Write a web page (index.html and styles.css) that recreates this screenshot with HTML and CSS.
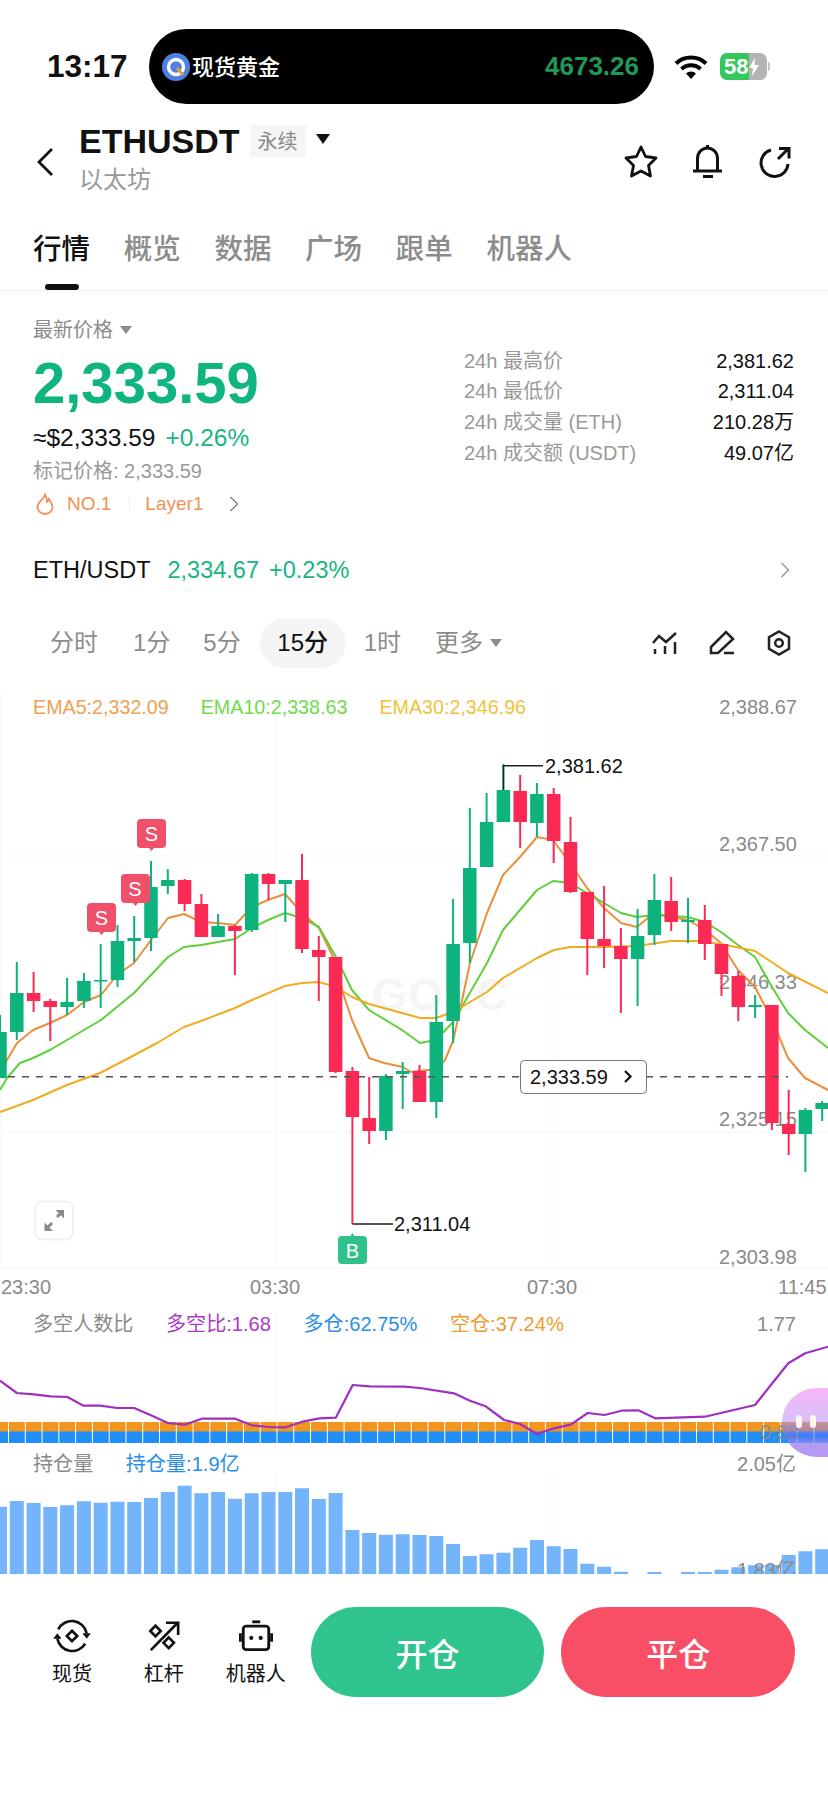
FILE: index.html
```html
<!DOCTYPE html>
<html lang="zh-CN">
<head>
<meta charset="utf-8">
<title>ETHUSDT</title>
<link rel="stylesheet" href="styles.css">
</head>
<body>
<div class="page">
  <div class="status">
    <div class="time">13:17</div>
    <div class="island">
      <svg class="gold-logo" viewBox="0 0 28 28"><circle cx="14" cy="14" r="14" fill="#4f7fe0"/><circle cx="14" cy="14" r="7.5" fill="none" stroke="#fff" stroke-width="3.4"/><path d="M15 15l6 7" stroke="#d9a441" stroke-width="3"/></svg>
      <span class="gold-name">现货黄金</span>
      <span class="gold-price">4673.26</span>
    </div>
    <svg class="wifi" viewBox="0 0 34 24"><path d="M2 8.5a22 22 0 0 1 30 0M7.5 14a14 14 0 0 1 19 0" fill="none" stroke="#000" stroke-width="4"/><path d="M12 18.5a7.5 7.5 0 0 1 10 0L17 24z" fill="#000"/></svg>
    <div class="battery"><span class="battery-num">58</span><svg class="bolt" viewBox="0 0 10 18"><path d="M6 0L0 10h4l-1 8 7-11H5.500z" fill="#fff"/></svg></div>
    <span class="battery-tip"></span>
  </div>

  <header class="head">
    <svg class="back" viewBox="0 0 18 30"><path d="M16 2L3 15l13 13" fill="none" stroke="#111" stroke-width="2.800"/></svg>
    <div class="title-block">
      <div class="title-line">
        <span class="symbol">ETHUSDT</span>
        <span class="tag">永续</span>
        <span class="caret"></span>
      </div>
      <div class="subname">以太坊</div>
    </div>
    <div class="head-icons">
      <svg class="hicon" viewBox="0 0 36 36"><path d="M18 3l4.500 9.500L33 14l-7.500 7.500 2 10.500L18 27l-9.500 5 2-10.500L3 14l10.500-1.500z" fill="none" stroke="#111" stroke-width="2.800" stroke-linejoin="round"/></svg>
      <svg class="hicon" viewBox="0 0 36 36"><path d="M3 27h29M7.500 27V14.500a10 10.500 0 0 1 20 0V27M17.500 4V1M13 32.500h10" fill="none" stroke="#111" stroke-width="3"/></svg>
      <svg class="hicon" viewBox="0 0 36 36"><path d="M14 6a13.500 13.500 0 1 0 17 14M21 15L31 5M22 4.500h10v10" fill="none" stroke="#111" stroke-width="3"/></svg>
    </div>
  </header>

  <nav class="tabs">
    <span class="tab tab-active">行情</span>
    <span class="tab">概览</span>
    <span class="tab">数据</span>
    <span class="tab">广场</span>
    <span class="tab">跟单</span>
    <span class="tab">机器人</span>
  </nav>

  <section class="price">
    <div class="price-left">
      <div class="latest">最新价格<span class="mini-caret"></span></div>
      <div class="big">2,333.59</div>
      <div class="usd"><span class="usd-val">≈$2,333.59</span><span class="up">+0.26%</span></div>
      <div class="mark">标记价格: 2,333.59</div>
      <div class="labels">
        <svg class="fire" viewBox="0 0 18 22"><path d="M9 1.500c0 4-7.500 7-7.500 12.500a7.500 7 0 0 0 15 0C16.500 10 14 8 13 6c-.5 1.500-1 2.500-2 3C11 6 10.500 3.500 9 1.500z" fill="none" stroke="#ef9255" stroke-width="1.800"/></svg>
        <span class="no1">NO.1</span>
        <span class="sep"></span>
        <span class="layer">Layer1</span>
        <svg class="chev" viewBox="0 0 10 16"><path d="M1.500 1l7 7-7 7" fill="none" stroke="#888" stroke-width="1.500"/></svg>
      </div>
    </div>
    <dl class="stats">
      <div class="stat"><dt>24h 最高价</dt><dd>2,381.62</dd></div>
      <div class="stat"><dt>24h 最低价</dt><dd>2,311.04</dd></div>
      <div class="stat"><dt>24h 成交量 (ETH)</dt><dd>210.28万</dd></div>
      <div class="stat"><dt>24h 成交额 (USDT)</dt><dd>49.07亿</dd></div>
    </dl>
  </section>

  <div class="pair">
    <span class="pair-name">ETH/USDT</span>
    <span class="pair-price">2,334.67</span>
    <span class="pair-price pair-pct">+0.23%</span>
    <svg class="chev pair-chev" viewBox="0 0 10 16"><path d="M1.500 1l7 7-7 7" fill="none" stroke="#999" stroke-width="1.500"/></svg>
  </div>

  <div class="periods">
    <span class="period p1">分时</span>
    <span class="period p2">1分</span>
    <span class="period p3">5分</span>
    <span class="period period-active">15分</span>
    <span class="period p5">1时</span>
    <span class="period p6">更多<span class="mini-caret"></span></span>
    <div class="tools">
      <svg class="tool-icon" viewBox="0 0 26 26"><path d="M1 13l6-7 7 6 10-9M3 19v5M13 16v8M23 12v12" fill="none" stroke="#222" stroke-width="2.500"/></svg>
      <svg class="tool-icon" viewBox="0 0 26 26"><path d="M2 17L17 2l7 7L9 23H2zM15 23h10" fill="none" stroke="#222" stroke-width="2.500"/></svg>
      <svg class="tool-icon" viewBox="0 0 26 26"><path d="M13 1.500l10 5.700v11.600l-10 5.700-10-5.700V7.200z" fill="none" stroke="#222" stroke-width="2.500"/><circle cx="13" cy="13" r="3.800" fill="none" stroke="#222" stroke-width="2.500"/></svg>
    </div>
  </div>

  <div class="panels">
    <section class="panel panel-main">
      <svg class="canvas" viewBox="0 668 828 632">
        <path class="grid" d="M1 690V1270M275 690V1270M552 690V1270M0 856H828M0 994H828M0 1132H828M0 1268H828"/>
        <text class="axis" x="719" y="851">2,367.50</text>
        <text class="axis" x="719" y="989">2,346.33</text>
        <text class="axis" x="719" y="1126">2,325.15</text>
        <text class="axis" x="719" y="1264">2,303.98</text>
        <text class="watermark" x="372" y="1010">GOEC</text>
        <polyline class="ema ema5" points="0,1078 7,1060 17,1043 33,1030 50,1023 67,1015 84,1002 101,995 117,975 134,963 151,940 168,918 184,914 201,922 218,923 235,925 252,907 268,900 285,894 302,913 319,928 336,963 343,993 352,1020 369,1058 384,1063 403,1067 411,1072 427,1070 436,1070 445,1060 453,1041 460,1010 470,963 487,913 503,875 520,857 537,837 553,840 570,863 587,888 604,908 621,923 637,927 654,913 671,917 688,920 705,930 721,943 738,970 755,987 772,1020 788,1058 805,1078 828,1090"/>
        <polyline class="ema ema10" points="0,1090 7,1078 20,1063 33,1058 50,1050 67,1040 101,1020 134,993 168,957 184,947 201,945 218,942 235,939 252,928 268,920 285,913 302,918 319,927 336,957 352,990 369,1010 402,1030 420,1043 436,1040 453,1022 460,1010 487,963 503,930 520,910 537,890 553,881 570,883 587,893 604,903 621,913 637,917 654,915 671,916 688,917 705,922 721,932 738,945 755,957 772,987 788,1013 805,1030 828,1048"/>
        <polyline class="ema ema30" points="0,1112 33,1100 67,1085 100,1073 127,1059 157,1043 184,1027 201,1021 235,1008 252,1000 285,986 302,983 319,982 336,987 352,997 369,1004 402,1013 420,1018 436,1018 453,1012 487,992 503,978 537,958 554,950 570,947 604,947 637,946 671,941 697,941 721,944 755,951 788,973 828,993"/>
        <path class="wick wick-g" d="M0 1015V1078M16.800 962V1040M67.100 978V1015M83.900 973V1008M100.700 944V1008M117.500 925V987M134.200 916V962M151 861V951M167.800 869V894M218.100 914V937M251.700 873V932M285.300 880V922M385.900 1074V1140M402.700 1062V1109M436.300 995V1118M453.100 899V1043M469.800 808V963M486.600 793V867M503.400 764V822M536.900 783V837M637.600 909V1006M654.400 874V945M688 898V943M755.100 995V1018M805.400 1108V1172M822.200 1101V1121"/>
        <path class="body body-g" d="M0 1032V1078M16.800 993V1032M67.100 1002V1007M83.900 981V1001M100.700 980V981.500M117.500 941V980M134.200 938V941M151 887V938M167.800 880V886M218.100 926V937M251.700 874V930M285.300 880V884M385.900 1076V1131M402.700 1071V1074M436.300 1022V1102M453.100 944V1021M469.800 868V943M486.600 822V867M503.400 790V822M536.900 794V823M637.600 936V959M654.400 900V935M688 920V922M755.100 1005V1007M805.400 1110V1134M822.200 1103V1109"/>
        <path class="wick wick-r" d="M33.600 972V1012M50.300 999V1041M184.600 879V911M201.400 894V937M234.900 925V975M268.500 873V900M302 854V953M318.800 936V1001M335.600 957V1073M352.400 1067V1224M369.200 1077V1144M419.500 1065V1102M520.200 775V848M553.700 788V863M570.500 817V893M587.300 892V975M604.100 886V968M620.900 928V1013M671.200 877V931M704.800 905V960M721.500 944V996M738.300 971V1021M771.900 1005V1130M788.700 1090V1155"/>
        <path class="body body-r" d="M33.600 993V1001M50.300 1001V1007M184.600 880V904M201.400 904V937M234.900 926V931M268.500 874V884M302 880V949M318.800 950V957M335.600 957V1072M352.400 1071V1117M369.200 1118V1131M419.500 1071V1102M520.200 791V822M553.700 794V841M570.500 842V892M587.300 892V939M604.100 939V946M620.900 946V959M671.200 901V922M704.800 920V944M721.500 944V974M738.300 976V1007M771.900 1005V1123M788.700 1124V1134"/>
        <path class="dash" d="M8 1076.700H520M646 1076.700H788"/>
        <path class="leader" d="M503.400 790V765.700H543M352.400 1224H393"/>
        <text class="hi" x="545" y="773">2,381.62</text>
        <text class="hi" x="394" y="1231">2,311.04</text>
        <rect class="now-box" x="520.500" y="1060.500" width="126" height="33" rx="4"/>
        <text class="hi" x="530" y="1084">2,333.59</text>
        <path class="now-chev" d="M625 1071l5.500 5.500-5.500 5.500"/>
        <g class="sig-s">
          <path d="M141 819h21a4 4 0 0 1 4 4v21a4 4 0 0 1-4 4h-8l-2.500 3-2.500-3h-8a4 4 0 0 1-4-4v-21a4 4 0 0 1 4-4z"/>
          <path d="M125 874h21a4 4 0 0 1 4 4v21a4 4 0 0 1-4 4h-8l-2.500 3-2.500-3h-8a4 4 0 0 1-4-4v-21a4 4 0 0 1 4-4z"/>
          <path d="M91 903h21a4 4 0 0 1 4 4v21a4 4 0 0 1-4 4h-8l-2.500 3-2.500-3h-8a4 4 0 0 1-4-4v-21a4 4 0 0 1 4-4z"/>
        </g>
        <text class="sig-text" x="151.500" y="841">S</text>
        <text class="sig-text" x="135" y="896">S</text>
        <text class="sig-text" x="101.500" y="925">S</text>
        <path class="sig-b" d="M342 1236h8.500l2-3 2 3h8.500a4 4 0 0 1 4 4v20a4 4 0 0 1-4 4h-21a4 4 0 0 1-4-4v-20a4 4 0 0 1 4-4z"/>
        <text class="sig-text" x="352.500" y="1258">B</text>
        <rect class="expand" x="35" y="1201.500" width="38" height="38" rx="7"/>
        <path class="expand-ico" d="M46 1229l6-6M57 1217l6-6"/>
        <path class="expand-tip" d="M44.500 1222.500v8.500h8.500zM64 1210h-8.500l8.500 8.500z"/>
        <text class="time-label" x="1" y="1294">23:30</text>
        <text class="time-label" x="250" y="1294">03:30</text>
        <text class="time-label" x="527" y="1294">07:30</text>
        <text class="time-label" x="778" y="1294">11:45</text>
      </svg>
      <div class="legend legend-main">
        <span class="ema5-t">EMA5:2,332.09</span>
        <span class="ema10-t">EMA10:2,338.63</span>
        <span class="ema30-t">EMA30:2,346.96</span>
        <span class="legend-right">2,388.67</span>
      </div>
    </section>

    <section class="panel panel-ratio">
      <svg class="canvas" viewBox="0 1300 828 150">
        <path class="grid" d="M275 1310V1450M552 1310V1450"/>
        <rect class="bar-o" x="0" y="1422" width="828" height="10"/>
        <rect class="bar-b" x="0" y="1431.500" width="828" height="11.500"/>
        <path class="bar-gaps" d="M8 1432.500H828"/>
        <text class="axis" x="760" y="1439">0.83</text>
        <polyline class="ratio" points="0,1380.700 16.900,1393 33.800,1394.300 50.700,1396.300 67.600,1397 83.400,1405.700 100.300,1405.700 117.200,1408 134.100,1408 151,1415.300 167.900,1423 184.800,1424.700 201.700,1418.700 235,1418.700 251.800,1425.300 268.700,1427 285.600,1427.300 302.500,1421.700 319.400,1418.300 335.800,1417.700 352.700,1385 369.600,1386.300 403.900,1386.700 419.700,1388 454,1393.300 470,1400.700 485.700,1406.300 504.200,1420 520,1424 537,1434 553.900,1428.300 570.800,1424.700 587.700,1413 604.500,1415 621.400,1410.700 638.300,1410.300 655.200,1418.300 704.900,1416.700 755,1405 770.900,1385 788.300,1363.300 805.200,1353.300 828,1346.700"/>
      </svg>
      <div class="legend legend-ratio">
        <span class="muted">多空人数比</span>
        <span class="purple">多空比:1.68</span>
        <span class="blue">多仓:62.75%</span>
        <span class="orange">空仓:37.24%</span>
        <span class="legend-right">1.77</span>
      </div>
    </section>

    <section class="panel panel-oi">
      <svg class="canvas" viewBox="0 1450 828 124">
        <path class="grid" d="M275 1470V1574M552 1470V1574"/>
        <path class="oi-bars" d="M0 1506.700V1574M16.800 1501V1574M33.600 1503V1574M50.300 1507V1574M67.100 1505.300V1574M83.900 1501.300V1574M100.700 1502.700V1574M117.500 1501.700V1574M134.200 1502V1574M151 1498V1574M167.800 1492V1574M184.600 1485.700V1574M201.400 1493.300V1574M218.100 1492V1574M234.900 1498.700V1574M251.700 1493.300V1574M268.500 1492V1574M285.300 1492V1574M302 1488.300V1574M318.800 1499V1574M335.600 1493V1574M352.400 1530V1574M369.200 1533V1574M385.900 1534.700V1574M402.700 1534.300V1574M419.500 1535V1574M436.300 1536V1574M453.100 1544V1574M469.800 1556V1574M486.600 1554.300V1574M503.400 1552.700V1574M520.200 1547.700V1574M537 1540V1574M553.700 1546.300V1574M570.500 1549V1574M587.300 1563.700V1574M604.100 1566.700V1574M620.900 1571.700V1574M654.400 1572V1574M688 1572V1574M704.800 1572V1574M721.500 1569.700V1574M738.300 1567.300V1574M755.100 1565.300V1574M771.900 1565V1574M788.700 1555V1574M805.400 1551.300V1574M822.200 1549.300V1574"/>
        <text class="axis" x="737" y="1577">1.83亿</text>
      </svg>
      <div class="legend legend-oi">
        <span class="muted">持仓量</span>
        <span class="blue">持仓量:1.9亿</span>
        <span class="legend-right">2.05亿</span>
      </div>
    </section>

    <div class="bubble"><span class="eye"></span><span class="eye"></span></div>
  </div>

  <footer class="foot">
    <div class="shortcut">
      <svg class="foot-icon" viewBox="0 0 36 36"><path d="M3.500 11A16 16 0 0 1 33.500 15M32 26A16 16 0 0 1 2.500 21" fill="none" stroke="#111" stroke-width="2.800"/><path d="M29 15h9l-4.500 6zM7 21h-9l4.500-6z" fill="#111"/><path d="M18 12.500l5.500 5.500-5.500 5.500-5.500-5.500z" fill="none" stroke="#111" stroke-width="2.800"/></svg>
      <span>现货</span>
    </div>
    <div class="shortcut">
      <svg class="foot-icon" viewBox="0 0 36 36"><path d="M4 33L32 4.500M20 4h13v13" fill="none" stroke="#111" stroke-width="2.800"/><path d="M9 7l5.500 5.700L9 18.400l-5.500-5.700zM23 19.500l5.500 5.700-5.500 5.700-5.500-5.700z" fill="none" stroke="#111" stroke-width="2.800"/></svg>
      <span>杠杆</span>
    </div>
    <div class="shortcut">
      <svg class="foot-icon" viewBox="0 0 36 36"><path d="M14 3h8.500" stroke="#111" stroke-width="3"/><rect x="4.500" y="7.500" width="27" height="25" rx="3" fill="none" stroke="#111" stroke-width="3"/><path d="M1.500 15v9M34.500 15v9" stroke="#111" stroke-width="3"/><circle cx="13" cy="20" r="2.200" fill="#111"/><circle cx="23" cy="20" r="2.200" fill="#111"/></svg>
      <span>机器人</span>
    </div>
    <button class="cta cta-open">开仓</button>
    <button class="cta cta-close">平仓</button>
  </footer>
</div>
</body>
</html>
```

FILE: styles.css
```css
* { box-sizing: border-box; margin: 0; padding: 0; }
html, body { background: #fff; }
body {
  width: 828px;
  height: 1801px;
  overflow: hidden;
  font-family: "Liberation Sans", "Noto Sans CJK SC", sans-serif;
  color: #111;
}
.page { width: 828px; }

/* status bar */
.status { display: flex; align-items: center; height: 104px; padding: 29px 0 0 47px; }
.time { width: 102px; font-size: 31.500px; font-weight: 700; }
.island {
  display: flex; align-items: center;
  width: 505px; height: 75px;
  padding: 0 15px 0 13px;
  background: #000;
  border-radius: 38px;
}
.gold-logo { width: 28px; height: 28px; margin-right: 2px; }
.gold-name { margin-bottom: 4px; color: #fff; font-size: 22px; font-weight: 500; }
.gold-price { margin-left: auto; color: #1e9a58; font-size: 26px; font-weight: 700; }
.wifi { width: 34px; height: 24px; margin-left: 20px; }
.battery {
  display: flex; align-items: center;
  width: 47px; height: 27px;
  margin-left: 12px;
  padding-left: 4px;
  border-radius: 7px;
  background: linear-gradient(90deg, #34c759 0 62%, #b4b4b4 62% 100%);
}
.battery-num { color: #fff; font-size: 22px; font-weight: 700; line-height: 27px; }
.bolt { width: 10px; height: 18px; margin-left: 1px; }
.battery-tip { width: 2px; height: 9px; margin-left: 1px; background: #c4c4c4; border-radius: 0 2px 2px 0; }

/* header */
.head { display: flex; align-items: center; height: 96px; padding: 20px 35px 0 36px; }
.back { width: 18px; height: 30px; }
.title-block { align-self: flex-start; margin-left: 25px; }
.title-line { display: flex; align-items: center; height: 34px; }
.symbol { font-size: 34px; font-weight: 700; line-height: 34px; }
.tag {
  display: flex; align-items: center; justify-content: center;
  width: 56px; height: 32px;
  margin-left: 10px;
  padding-bottom: 2px;
  background: #f5f5f5;
  color: #888;
  font-size: 20px;
}
.caret {
  width: 0; height: 0;
  margin: 0 0 4px 10px;
  border-left: 7.5px solid transparent;
  border-right: 7.5px solid transparent;
  border-top: 10px solid #111;
}
.subname { margin-top: 5px; color: #999; font-size: 24px; line-height: 34px; }
.head-icons { display: flex; align-items: center; gap: 31px; margin-left: auto; }
.hicon { width: 36px; height: 36px; }

/* tabs */
.tabs {
  display: flex; gap: 33.700px;
  height: 91px;
  padding: 32px 0 0 33px;
  border-bottom: 1px solid #f2f2f2;
}
.tab { position: relative; color: #8c8c8c; font-size: 28.500px; line-height: 34px; height: 34px; font-weight: 500; }
.tab-active { color: #111; }
.tab-active::after {
  content: "";
  position: absolute; left: 12px; top: 52px;
  width: 34px; height: 6px;
  border-radius: 3px;
  background: #111;
}

/* price block */
.price { display: flex; padding: 25px 34px 0 33px; }
.price-left { flex: 1; }
.latest { display: flex; align-items: center; color: #8c8c8c; font-size: 20px; line-height: 28px; }
.mini-caret {
  display: inline-block;
  width: 0; height: 0;
  margin-left: 7px;
  border-left: 6px solid transparent;
  border-right: 6px solid transparent;
  border-top: 8px solid #8c8c8c;
}
.big { margin-top: 7px; color: #0fb57f; font-size: 58px; font-weight: 700; line-height: 64px; }
.usd { display: flex; gap: 10px; margin-top: 8px; font-size: 24.500px; line-height: 30px; }
.usd-val { font-weight: 500; }
.up { color: #17b582; }
.mark { margin-top: 5px; color: #999; font-size: 20px; line-height: 26px; }
.labels { display: flex; align-items: center; height: 26px; margin-top: 7px; font-size: 19px; color: #ef9255; }
.fire { width: 18px; height: 22px; margin-left: 3px; }
.no1 { margin-left: 13px; }
.sep { width: 1px; height: 15px; margin: 0 15px 0 18px; background: #eee; }
.chev { width: 10px; height: 16px; }
.labels .chev { margin-left: 26px; }
.stats { width: 330px; padding-top: 29.500px; }
.stat { display: flex; justify-content: space-between; height: 30.700px; line-height: 30.700px; font-size: 20px; }
.stat dt { color: #999; }
.stat dd { color: #111; }

/* pair row */
.pair { display: flex; align-items: center; height: 30px; margin-top: 38px; padding: 0 38px 0 33px; }
.pair-name { font-size: 23.500px; font-weight: 500; }
.pair-price { margin-left: 17px; color: #17b582; font-size: 23.500px; }
.pair-pct { margin-left: 10px; }
.pair-chev { margin-left: auto; }

/* period row */
.periods { position: relative; display: flex; align-items: center; height: 50px; margin-top: 33px; padding-left: 50px; }
.period { color: #8c8c8c; font-size: 24px; line-height: 50px; white-space: nowrap; }
.p2 { margin-left: 35px; }
.p3 { margin-left: 33px; }
.period-active {
  margin-left: 19px;
  width: 86px; height: 50px;
  border-radius: 25px;
  background: #f5f5f5;
  color: #111;
  font-weight: 500;
  text-align: center;
}
.p5 { margin-left: 18px; }
.p6 { display: flex; align-items: center; margin-left: 34px; }
.tools { display: flex; align-items: center; gap: 31px; margin-left: auto; padding-right: 36px; }
.tool-icon { width: 26px; height: 26px; }

/* chart panels */
.panels { position: relative; }
.panel { position: relative; overflow: hidden; }
.panel-main { height: 632px; }
.panel-ratio { height: 150px; }
.panel-oi { height: 124px; }
.canvas { position: absolute; left: 0; top: 0; width: 828px; height: 100%; }
.grid { fill: none; stroke: #f6f6f6; stroke-width: 1; }
.axis, .time-label { fill: #8a8a8a; font-size: 20px; }
.watermark { fill: #f5f5f5; font-size: 44px; font-weight: 700; letter-spacing: 2px; }
.ema { fill: none; stroke-width: 2; stroke-linejoin: round; }
.ema5 { stroke: #ea8f3c; }
.ema10 { stroke: #5fcf3a; }
.ema30 { stroke: #f0ab1f; }
.wick { fill: none; stroke-width: 2; }
.body { fill: none; stroke-width: 13.500; }
.wick-g, .body-g { stroke: #0db27c; }
.wick-r, .body-r { stroke: #fb2a55; }
.dash { fill: none; stroke: #555; stroke-width: 1.500; stroke-dasharray: 7 7; }
.leader { fill: none; stroke: #222; stroke-width: 1.500; }
.hi { fill: #111; font-size: 20px; }
.now-box { fill: #fff; stroke: #777; stroke-width: 1; }
.now-chev { fill: none; stroke: #111; stroke-width: 2.200; }
.sig-s path { fill: #f0506a; }
.sig-b { fill: #2ec28a; }
.sig-text { fill: #fff; font-size: 20px; text-anchor: middle; }
.expand { fill: #fff; stroke: #f1f1f1; stroke-width: 2; }
.expand-ico { fill: none; stroke: #8a8a8a; stroke-width: 3; }
.expand-tip { fill: #8a8a8a; }
.bar-o { fill: #f0961e; }
.bar-b { fill: #1e8efa; }
.bar-gaps { fill: none; stroke: #fff; stroke-width: 22; stroke-dasharray: 1 15.780; }
.ratio { fill: none; stroke: #a02fc0; stroke-width: 2.200; stroke-linejoin: round; }
.oi-bars { fill: none; stroke: #74b4fb; stroke-width: 14; }

.legend { position: relative; display: flex; height: 26px; font-size: 20.100px; line-height: 26px; white-space: nowrap; }
.legend-right { margin-left: auto; color: #8a8a8a; font-size: 20px; }
.legend-main { margin-top: 26px; padding: 0 31px 0 33px; gap: 32px; font-size: 19.700px; }
.legend-ratio { margin-top: 11px; padding: 0 32px 0 33px; gap: 32.500px; }
.legend-oi { margin-top: 1px; padding: 0 32px 0 33px; gap: 32.500px; }
.ema5-t { color: #f0a050; }
.ema10-t { color: #6fdc4a; }
.ema30-t { color: #f2c23c; }
.muted { color: #8a8a8a; }
.purple { color: #a83cc4; }
.blue { color: #2a8ee8; }
.orange { color: #f09a30; }
.bubble {
  position: absolute; right: 0; top: 720px;
  display: flex; gap: 8px;
  width: 46px; height: 69px;
  padding: 27px 0 0 14px;
  border-radius: 35px 0 0 35px;
  background: linear-gradient(180deg, rgba(248,178,250,.95) 0%, rgba(190,150,240,.6) 45%, rgba(90,110,245,.55) 70%, rgba(176,144,240,.92) 85%, rgba(176,144,240,.92) 100%);
}
.eye { width: 6px; height: 13px; border-radius: 3px; background: #fff5ea; }

/* footer */
.foot { display: flex; align-items: flex-start; padding: 33px 33px 0 26px; }
.shortcut { display: flex; flex-direction: column; align-items: center; width: 92px; margin-top: 12px; font-size: 20px; }
.shortcut span { margin-top: 8px; line-height: 26px; white-space: nowrap; }
.foot-icon { width: 34px; height: 34px; overflow: visible; }
.cta {
  width: 234px; height: 90px;
  border: 0;
  border-radius: 45px;
  color: #fff;
  font-family: inherit;
  font-size: 32px;
  font-weight: 500;
}
.cta-open { margin-left: 9px; background: #2fc48d; }
.cta-close { margin-left: 17px; background: #f84f66; }
```
